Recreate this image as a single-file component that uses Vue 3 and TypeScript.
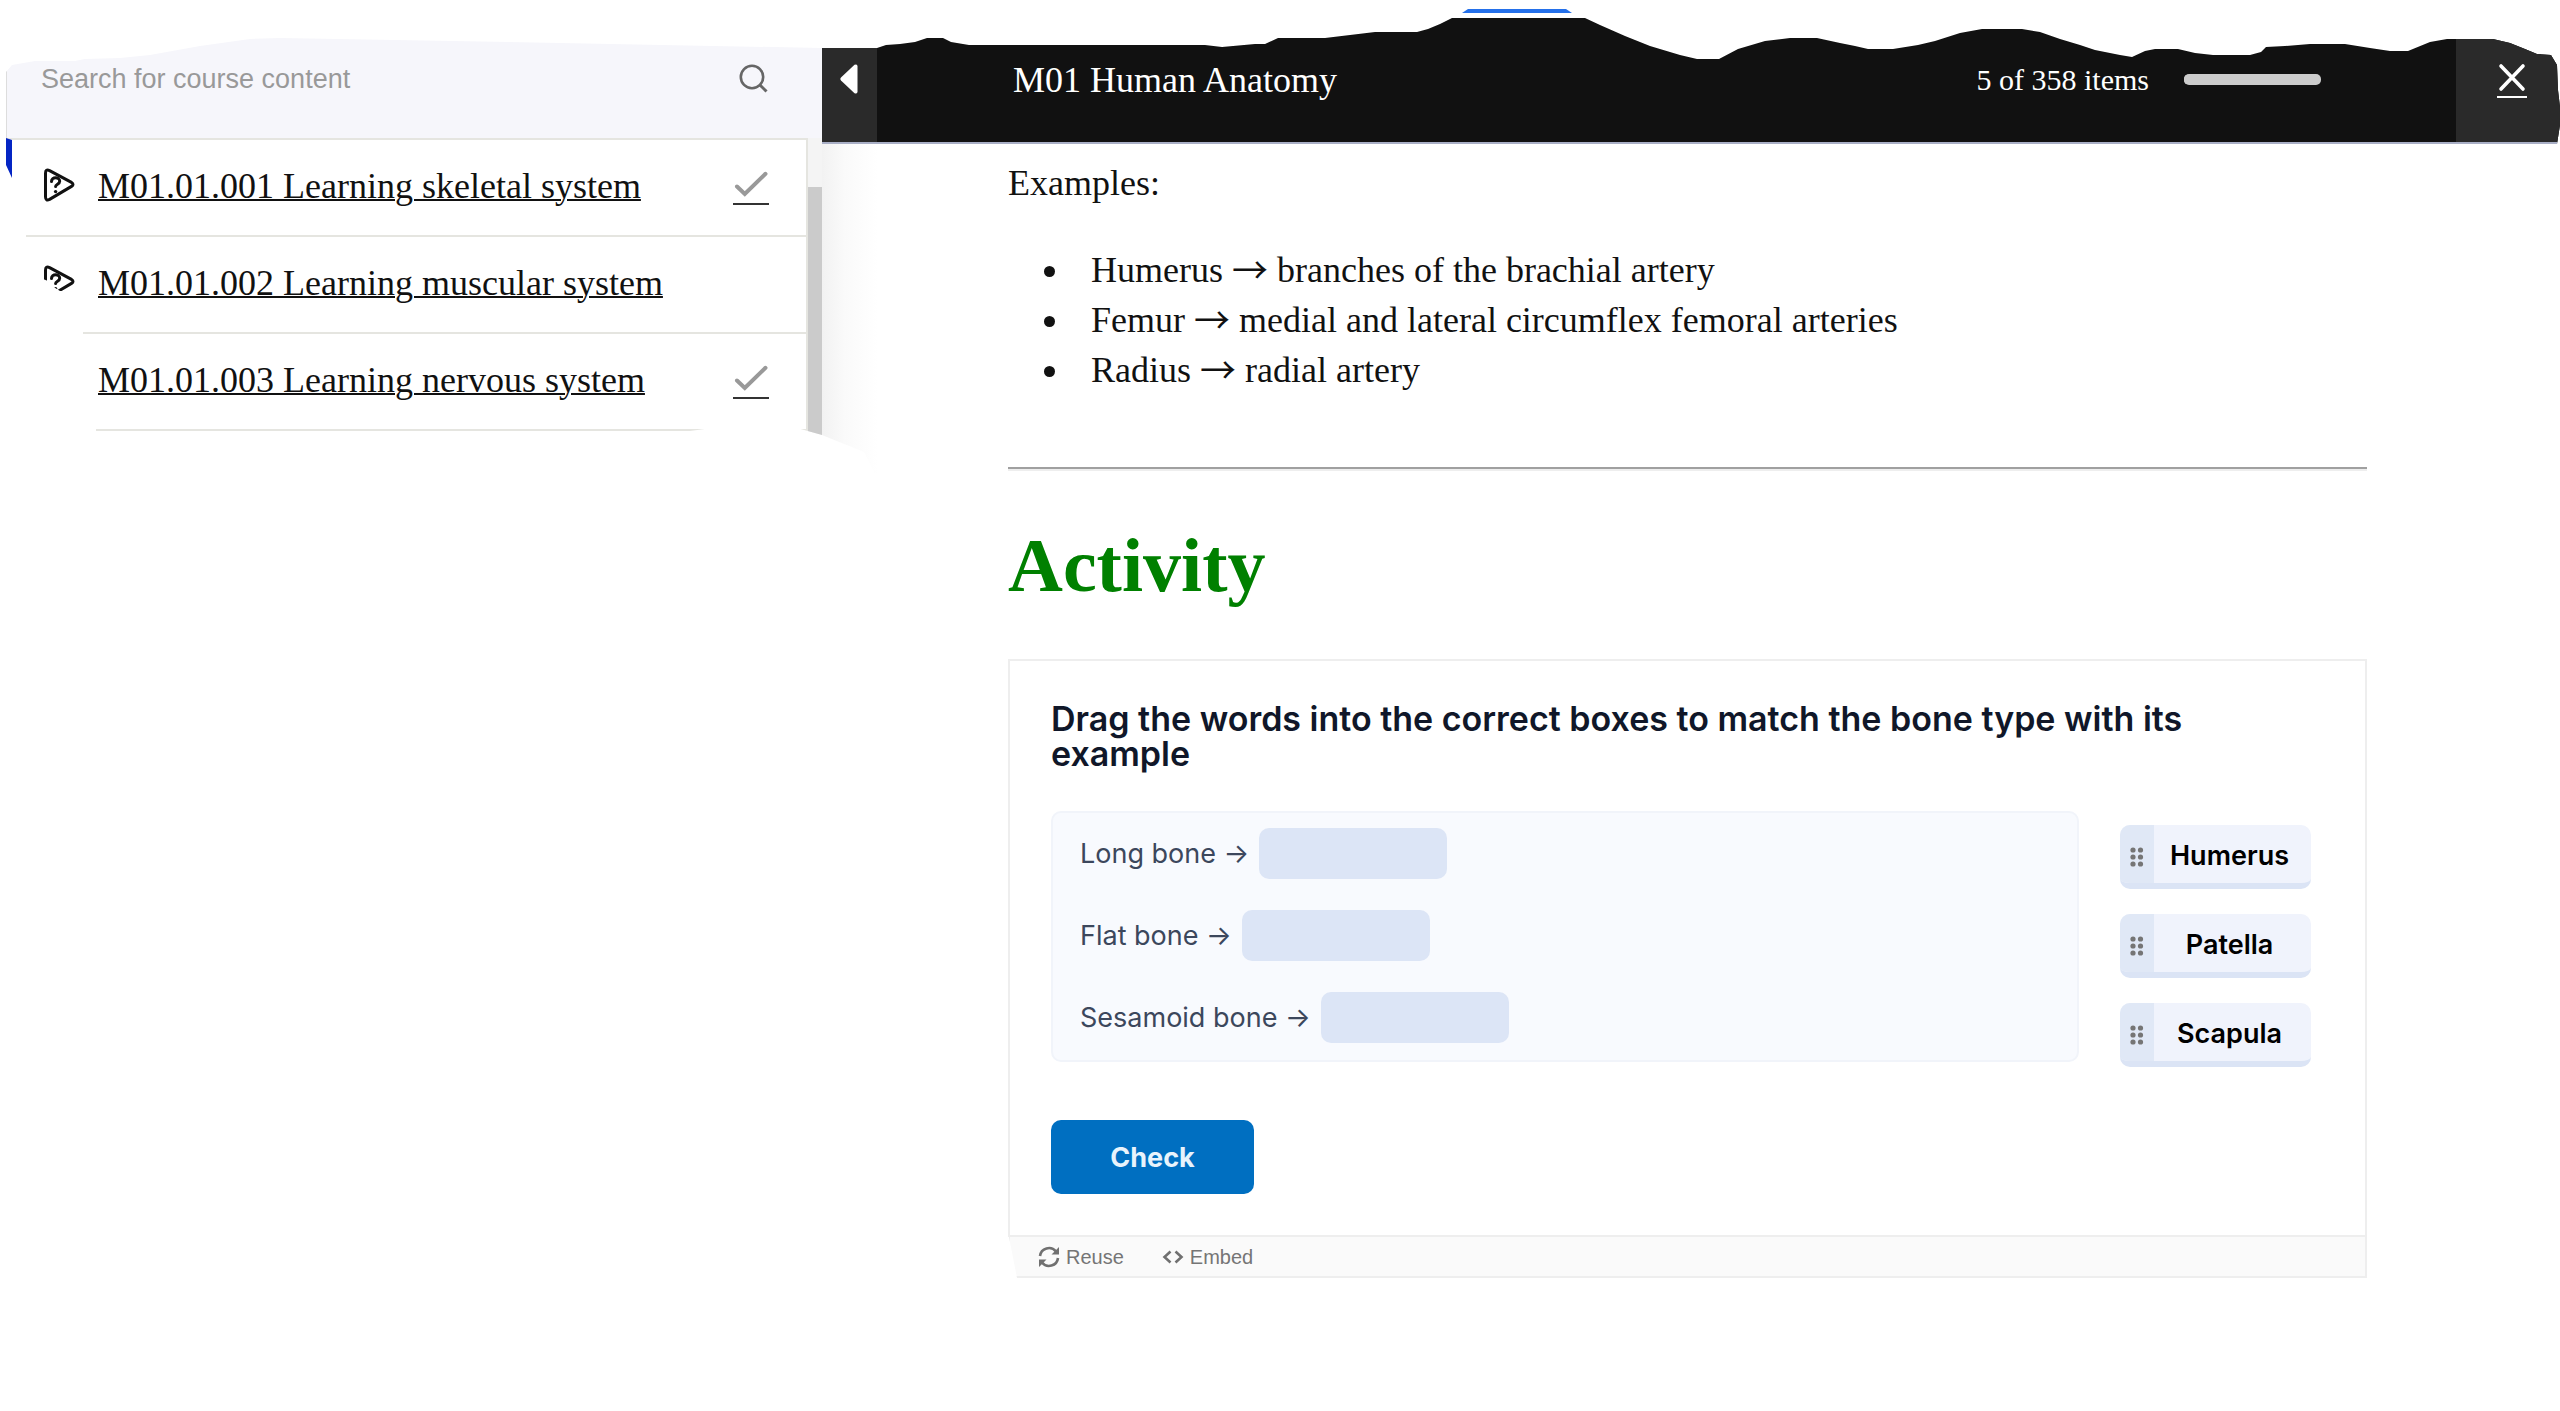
<script setup lang="ts">
import { ref } from 'vue'

interface Lesson {
  code: string
  title: string
  icon: boolean
  done: boolean
}

interface Example {
  bone: string
  supply: string
}

const lessons: Lesson[] = [
  { code: 'M01.01.001', title: 'Learning skeletal system', icon: true, done: true },
  { code: 'M01.01.002', title: 'Learning muscular system', icon: true, done: false },
  { code: 'M01.01.003', title: 'Learning nervous system', icon: false, done: true },
]

const examples: Example[] = [
  { bone: 'Humerus', supply: 'branches of the brachial artery' },
  { bone: 'Femur', supply: 'medial and lateral circumflex femoral arteries' },
  { bone: 'Radius', supply: 'radial artery' },
]

const bones: string[] = ['Long bone', 'Flat bone', 'Sesamoid bone']
const words: string[] = ['Humerus', 'Patella', 'Scapula']

const query = ref('')
</script>

<template>
  <div class="page">
    <aside class="sidebar">
      <form class="search" @submit.prevent>
        <input v-model="query" type="text" aria-label="Search for course content" placeholder="Search for course content" />
        <button type="submit" aria-label="Search">
          <svg width="30" height="30" viewBox="0 0 30 30" fill="none" stroke="#666" stroke-width="2.6">
            <circle cx="13" cy="13" r="11.2" />
            <path d="M20.5 20.5L27.5 27.5" stroke-width="3" />
          </svg>
        </button>
      </form>
      <div class="outline">
        <ul class="lessons">
          <li v-for="lesson in lessons" :key="lesson.code">
            <span class="kind">
              <svg v-if="lesson.icon" width="32" height="34" viewBox="0 0 32 34" fill="none" stroke="#111" stroke-width="3" stroke-linejoin="round" stroke-linecap="round">
                <path d="M2.5 5.2Q2.500 .8 6.600 2.600L28.500 14.400Q31.500 16.400 28.500 18.400L6.600 31.400Q2.500 33.200 2.500 28.800Z" />
                <path d="M8.500 13.500C8.500 8.600 16.700 8.600 16.700 13.300C16.700 16.400 12.600 16 12.600 18.600" />
                <circle cx="12.600" cy="23.600" r="1.700" fill="#111" stroke="none" />
              </svg>
            </span>
            <a href="#">{{ lesson.code }} {{ lesson.title }}</a>
            <span v-if="lesson.done" class="done">
              <svg width="36" height="34" viewBox="0 0 36 34" fill="none">
                <path d="M4 15.500L11.800 23L32.500 2.800" stroke="#999" stroke-width="4" stroke-linecap="round" />
                <path d="M0 33H36" stroke="#333" stroke-width="2" />
              </svg>
            </span>
          </li>
        </ul>
        <div class="track"><div class="thumb"></div></div>
      </div>
    </aside>

    <main class="main">
      <div class="accent"></div>
      <header class="bar">
        <button class="collapse" type="button" aria-label="Collapse menu">
          <svg width="18" height="30" viewBox="0 0 18 30"><path d="M1 13.400L14.500 .8Q17.500 -.5 17.500 2.500V27.500Q17.500 30.500 14.500 29.200L1 16.600Q-.3 15 1 13.400Z" fill="#fff" /></svg>
        </button>
        <span class="course">M01 Human Anatomy</span>
        <label class="count" for="progress">5 of 358 items</label>
        <progress id="progress" value="5" max="358"></progress>
        <button class="close" type="button" aria-label="Close">
          <svg width="30" height="36" viewBox="0 0 30 36" fill="none" stroke="#fff">
            <path d="M4 4L26 27M26 4L4 27" stroke-width="3.600" stroke-linecap="round" />
            <path d="M0 35H30" stroke-width="2" />
          </svg>
        </button>
      </header>

      <article class="content">
        <p>Examples:</p>
        <ul class="examples">
          <li v-for="item in examples" :key="item.bone">
            <span>{{ item.bone }} <span class="arrow">→</span> {{ item.supply }}</span>
          </li>
        </ul>
        <hr />
        <h1>Activity</h1>
        <section class="card">
          <div class="task">
            <h2>Drag the words into the correct boxes to match the bone type with its example</h2>
            <div class="board">
              <div class="panel">
                <div v-for="bone in bones" :key="bone" class="row">
                  <span>{{ bone }} →</span>
                  <span class="drop"></span>
                </div>
              </div>
              <div class="words">
                <button v-for="word in words" :key="word" class="word" type="button">
                  <span class="grip">
                    <svg width="14" height="20" viewBox="0 0 14 20" fill="#757575">
                      <circle cx="3" cy="3" r="2.600" /><circle cx="10.500" cy="3" r="2.600" />
                      <circle cx="3" cy="10" r="2.600" /><circle cx="10.500" cy="10" r="2.600" />
                      <circle cx="3" cy="17" r="2.600" /><circle cx="10.500" cy="17" r="2.600" />
                    </svg>
                  </span>
                  <span class="label">{{ word }}</span>
                </button>
              </div>
            </div>
            <button class="check" type="button">Check</button>
          </div>
          <footer class="actions">
            <button type="button">
              <svg width="22" height="22" viewBox="0 0 22 22" fill="none" stroke="#707070" stroke-width="2.600">
                <path d="M2 10A9 9 0 0 1 18 5.500M20 12A9 9 0 0 1 4 16.500" />
                <path d="M21 1V8.500H13.500ZM1 21V13.500H8.500Z" fill="#707070" stroke="none" />
              </svg>
              Reuse
            </button>
            <button type="button">
              <svg width="22" height="16" viewBox="0 0 22 16" fill="none" stroke="#707070" stroke-width="2.600">
                <path d="M8.500 2.500L2.500 8L8.500 13.500M13.500 2.500L19.500 8L13.500 13.500" />
              </svg>
              Embed
            </button>
          </footer>
        </section>
      </article>
    </main>
  </div>
</template>

<style>
body {
  background: #fff;
}
</style>

<style scoped>
* {
  box-sizing: border-box;
}

button {
  border: 0;
  padding: 0;
  background: none;
  cursor: pointer;
}

svg {
  display: block;
  flex: none;
}

.page {
  display: grid;
  grid-template-columns: minmax(0, 822fr) minmax(0, 1738fr);
  align-items: start;
  color: #111;
  font-family: 'Liberation Serif', 'Times New Roman', serif;
  font-size: 36px;
  line-height: 50px;
}

/* Sidebar with its torn outline */
.sidebar {
  padding-left: 6px;
  clip-path: polygon(
    6px 72px, 12px 65px, 35px 61px, 75px 61px, 85px 59px, 120px 58px, 150px 55px, 200px 46px,
    250px 39px, 280px 38px, 560px 43px, 100% 48px, 100% 435px, 797px 428px, 770px 424px,
    730px 424px, 712px 428px, 690px 431px, 96px 431px, 96px 400px, 83px 334px, 83px 320px,
    78px 291px, 60px 291px, 52px 286px, 48px 281px, 43px 279px, 26px 237px, 26px 226px,
    12px 200px, 12px 178px, 6px 165px
  );
}

.search {
  display: flex;
  align-items: center;
  height: 138px;
  padding: 20px 53px 0 34px;
  border-left: 1px solid #ddd;
  background: #f6f6fb;
}

.search input {
  flex: 1;
  min-width: 0;
  border: 0;
  padding: 0;
  outline: 0;
  background: transparent;
  color: #333;
  font: 27px 'Liberation Sans', Arial, sans-serif;
}

.search input::placeholder {
  color: #999;
  opacity: 1;
}

.outline {
  display: flex;
}

.lessons {
  flex: 1;
  margin: 0;
  padding: 0;
  list-style: none;
  border-top: 2px solid #e5e5e0;
  border-right: 2px solid #e5e5e0;
  border-left: 6px solid #0425c4;
}

.lessons li {
  display: flex;
  align-items: center;
  height: 97px;
  padding: 0 37px 0 31px;
  border-bottom: 2px solid #e5e5e0;
}

.kind {
  flex: 0 0 55px;
  padding-bottom: 6px;
}

.lessons a {
  flex: 1;
  padding-bottom: 4px;
  color: #111;
  text-decoration-thickness: 2px;
}

.track {
  width: 14px;
  padding-top: 49px;
  background: #f4f4f4;
}

.thumb {
  height: 100%;
  min-height: 254px;
  background: #cbcbcb;
}

/* Course header, torn along its top edge */
.main {
  position: relative;
}

.accent {
  position: absolute;
  top: 9px;
  left: 640px;
  width: 110px;
  height: 4px;
  background: #2470ea;
  clip-path: polygon(6px 0, 104px 0, 100% 100%, 0 100%);
}

.bar {
  display: flex;
  align-items: stretch;
  height: 144px;
  border-bottom: 2px solid #a9afc6;
  background: #111;
  color: #fff;
  clip-path: polygon(
    0 48px, 55px 48px, 64px 45px, 78px 44px, 93px 42px, 105px 38px, 121px 38px, 129px 42px,
    147px 45px, 383px 45px, 400px 47px, 433px 44px, 443px 44px, 456px 38px, 503px 38px,
    528px 35px, 553px 32px, 595px 32px, 606px 29px, 618px 24px, 630px 18px, 763px 18px,
    778px 25px, 803px 36px, 828px 46px, 858px 55px, 875px 59px, 897px 59px, 916px 49px,
    943px 41px, 968px 38px, 995px 38px, 1018px 43px, 1033px 46px, 1046px 49px, 1071px 49px,
    1096px 45px, 1113px 41px, 1138px 33px, 1160px 29px, 1200px 29px, 1218px 32px, 1238px 39px,
    1258px 45px, 1273px 50px, 1298px 55px, 1310px 57px, 1323px 51px, 1333px 49px, 1356px 49px,
    1373px 53px, 1391px 55px, 1428px 55px, 1439px 52px, 1444px 47px, 1463px 46px, 1488px 44px,
    1523px 44px, 1548px 48px, 1568px 51px, 1586px 51px, 1608px 42px, 1625px 39px, 1671px 39px,
    1688px 43px, 1703px 49px, 1715px 54px, 1729px 55px, 1735px 65px, 1736px 90px, 100% 107px,
    100% 125px, calc(100% - 3px) 100%, 0 100%
  );
}

.bar > * {
  padding-top: 16px;
}

.collapse,
.close {
  display: flex;
  align-items: center;
  background: #2a2a2a;
}

.collapse {
  flex: 0 0 55px;
  padding-left: 18px;
}

.close {
  flex: 0 0 104px;
  padding-left: 41px;
}

.bar .course,
.bar .count,
.bar .close {
  padding-top: 18px;
}

.course {
  flex: 1;
  align-self: center;
  padding-left: 136px;
}

.count {
  align-self: center;
  font-size: 30px;
}

.bar progress {
  appearance: none;
  align-self: center;
  width: 137px;
  height: 11px;
  margin: 16px 135px 0 35px;
  padding: 0;
  border: 0;
  border-radius: 5px;
  overflow: hidden;
  background: #ccc;
}

.bar progress::-webkit-progress-bar,
.bar progress::-webkit-progress-value {
  background: #ccc;
}

/* Lesson body */
.content {
  padding: 14px 193px 0 186px;
}

/* Shade the sidebar casts on the page */
.content::before {
  content: '';
  position: absolute;
  top: 144px;
  left: 0;
  width: 56px;
  height: 336px;
  background: linear-gradient(to right, #f2f2f2, #fafafa 40%, #fff);
  clip-path: polygon(0 0, 100% 0, 100% 100%, 42px 308px, 0 291px);
}

.content p {
  margin: 0 0 37px;
}

.examples {
  margin: 0 0 72px;
  padding-left: 36px;
  list-style: none;
}

.examples li {
  display: flex;
  align-items: center;
  gap: 36px;
}

.examples li::before {
  content: '';
  width: 11px;
  height: 11px;
  margin-top: 3px;
  border-radius: 50%;
  background: #111;
}

.arrow {
  font-family: 'Noto Sans CJK JP', sans-serif;
  line-height: 1;
  vertical-align: -2px;
}

hr {
  height: 4px;
  margin: 0 0 52px;
  border: 0;
  border-top: 2px solid #a0a0a0;
  border-bottom: 2px solid #eee;
}

h1 {
  margin: 0 0 52px;
  color: #008000;
  font-size: 76px;
  line-height: 84px;
}

.card {
  font-family: Inter, sans-serif;
}

.task {
  padding: 40px 54px 41px 41px;
  border: 2px solid #eee;
}

h2 {
  margin: 0 0 40px;
  color: #101729;
  font-size: 34px;
  font-weight: 600;
  line-height: 35px;
}

.board {
  display: flex;
  align-items: flex-start;
  gap: 41px;
  margin-bottom: 53px;
}

.panel {
  flex: 1;
  display: flex;
  flex-direction: column;
  gap: 31px;
  padding: 15px 27px 17px;
  border: 2px solid #f1f4fa;
  border-radius: 10px;
  background: #f8fafe;
  color: #3c475c;
  font-size: 27px;
}

.row {
  display: flex;
  align-items: center;
  gap: 10px;
  height: 51px;
}

.drop {
  width: 188px;
  height: 51px;
  border-radius: 10px;
  background: #dce5f6;
}

.words {
  display: flex;
  flex-direction: column;
  gap: 25px;
  padding-top: 14px;
}

.word {
  display: flex;
  width: 191px;
  height: 64px;
  border-bottom: 6px solid #dbe4f5;
  border-radius: 10px;
  overflow: hidden;
  background: #f0f3fc;
  color: #000;
  font: 600 27px/62px Inter, sans-serif;
}

.grip {
  display: flex;
  align-items: center;
  justify-content: center;
  width: 34px;
  height: 64px;
  background: #e0e8f6;
}

.label {
  flex: 1;
  padding-right: 6px;
}

.check {
  display: block;
  width: 203px;
  height: 74px;
  border-radius: 10px;
  background: #006fc1;
  color: #e8f3fc;
  font: 700 27px Inter, sans-serif;
}

.actions {
  display: flex;
  gap: 38px;
  height: 41px;
  padding-left: 28px;
  border: 2px solid #eee;
  border-top: 0;
  background: #fafafa;
  clip-path: polygon(1px 0, 100% 0, 100% 100%, 9px 100%);
}

.actions button {
  display: flex;
  align-items: center;
  gap: 6px;
  padding-top: 1px;
  color: #757575;
  font: 20px 'Liberation Sans', Arial, sans-serif;
}
</style>
